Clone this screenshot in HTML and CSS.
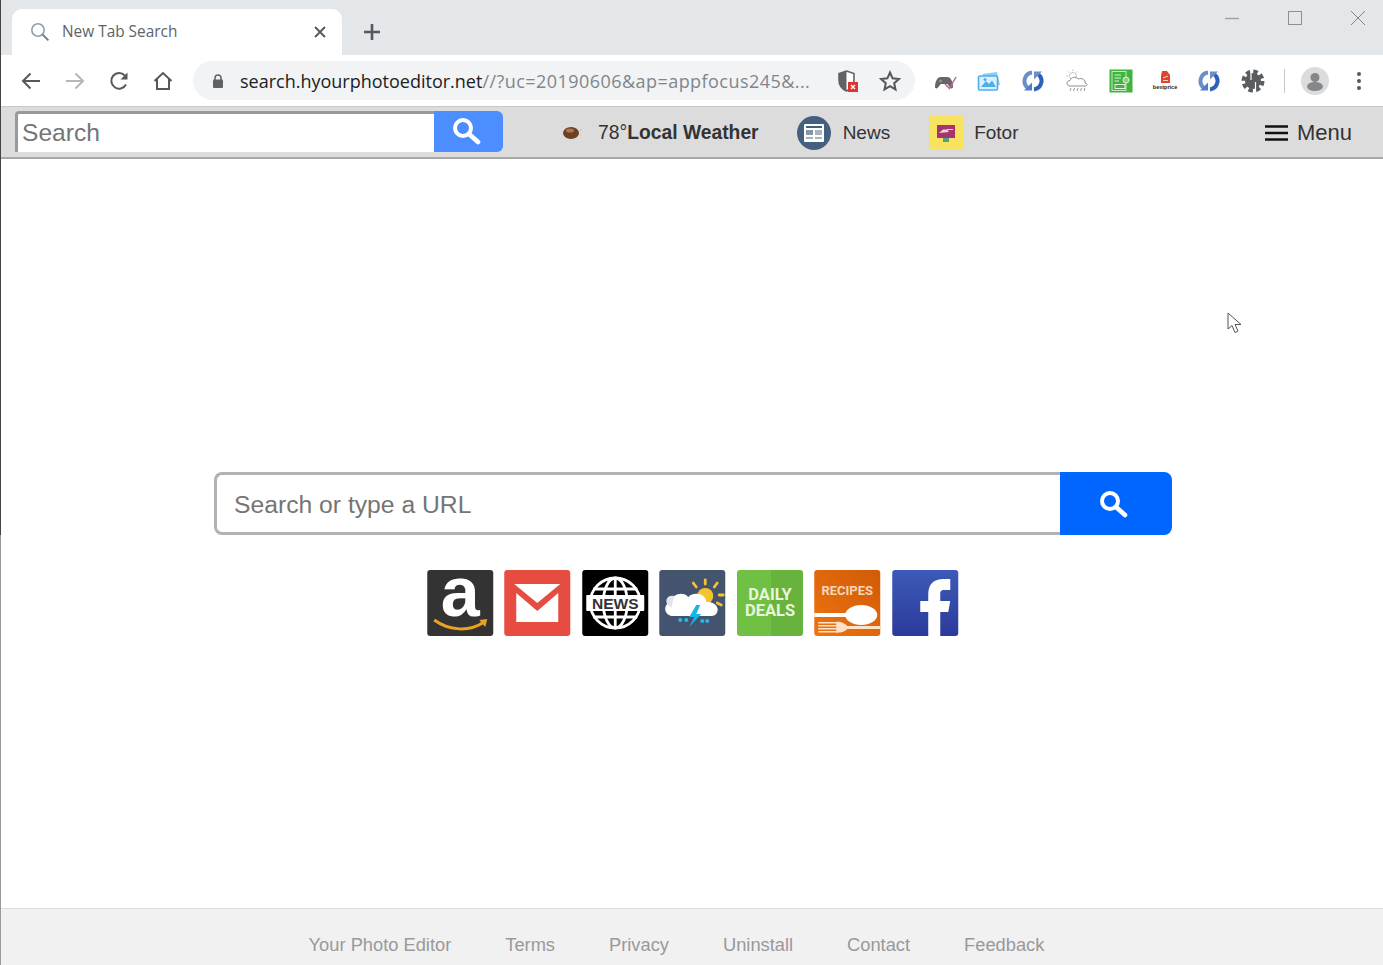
FILE: index.html
```html
<!doctype html>
<html>
  <head>
    <title>New Tab Search</title>
    <link rel="stylesheet" href="styles.css">
  </head>
  <body>
    <div id="window">
      <!-- browser tabs -->
      <div id="tabstrip">
        <div id="tab">
          <svg class="tab_icon" width="20" height="20" viewBox="0 0 20 20"><circle cx="8" cy="8" r="6.2" fill="none" stroke="#8aa0ad" stroke-width="1.6"/><path d="M12.6 12.6L18.4 18.4" stroke="#6f7478" stroke-width="1.8" fill="none"/></svg>
          <span id="tab_title">New Tab Search</span>
          <svg class="tab_close" width="12" height="12" viewBox="0 0 12 12"><path d="M1 1L11 11M11 1L1 11" stroke="#55585c" stroke-width="1.9"/></svg>
        </div>
        <svg id="new_tab" width="18" height="18" viewBox="0 0 18 18"><path d="M9 1V17M1 9H17" stroke="#55585c" stroke-width="2.6"/></svg>
        <div id="window_controls">
          <svg width="14" height="14" viewBox="0 0 14 14"><path d="M0 7.5H14" stroke="#999c9f" stroke-width="1.3"/></svg>
          <svg width="14" height="14" viewBox="0 0 14 14"><rect x=".5" y=".5" width="13" height="13" fill="none" stroke="#8d9093" stroke-width="1"/></svg>
          <svg width="14" height="14" viewBox="0 0 14 14"><path d="M0 0L14 14M14 0L0 14" stroke="#85888b" stroke-width="1"/></svg>
        </div>
      </div>

      <!-- browser toolbar -->
      <div id="toolbar">
        <div id="nav_buttons">
          <svg width="22" height="22" viewBox="0 0 22 22"><path d="M20 11H3M10.500 3.500L3 11L10.500 18.500" fill="none" stroke="#55585c" stroke-width="2"/></svg>
          <svg width="22" height="22" viewBox="0 0 22 22"><path d="M2 11H19M11.500 3.500L19 11L11.500 18.500" fill="none" stroke="#b4b7ba" stroke-width="2"/></svg>
          <svg width="22" height="22" viewBox="0 0 22 22"><path d="M18 14.500A7.800 7.800 0 1 1 16.800 5.500" fill="none" stroke="#55585c" stroke-width="2"/><path d="M19.500 2.500V9.500H12.500Z" fill="#55585c"/></svg>
          <svg width="22" height="22" viewBox="0 0 22 22"><path d="M2.500 11L11 3L19.500 11M5 9V19H17V9" fill="none" stroke="#55585c" stroke-width="2"/></svg>
        </div>
        <div id="address_bar">
          <svg class="lock" width="12" height="14" viewBox="0 0 12 14"><path d="M3 6V4a3 3 0 0 1 6 0V6" fill="none" stroke="#5f6368" stroke-width="1.500"/><rect x="1" y="5.500" width="10" height="8.500" rx="1" fill="#5f6368"/></svg>
          <div id="url"><span class="host">search.hyourphotoeditor.net</span><span class="path">//?uc=20190606&amp;ap=appfocus245&amp;...</span></div>
          <svg class="shield" width="22" height="24" viewBox="0 0 22 24"><path d="M9.500 2L17 4.500V11C17 16 14 20 9.500 22C5 20 2 16 2 11V4.500Z" fill="#fff" stroke="#5f6368" stroke-width="1.600"/><path d="M9.500 2L2 4.500V11C2 16 5 20 9.500 22Z" fill="#5f6368"/><rect x="11" y="13" width="10" height="10" fill="#dd3333"/><path d="M14 16L18 20M18 16L14 20" stroke="#fff" stroke-width="1.400"/></svg>
          <svg class="star" width="22" height="22" viewBox="0 0 22 22"><path d="M11 2.500L13.600 8.300L19.900 9L15.200 13.200L16.500 19.400L11 16.200L5.500 19.400L6.800 13.200L2.100 9L8.400 8.300Z" fill="none" stroke="#55585c" stroke-width="2"/></svg>
        </div>
        <div id="extensions">
          <svg width="24" height="24" viewBox="0 0 24 24"><path d="M2 18C2 13 4 8 8 8H14C18 8 20 13 20 18C20 20 17 20 16 17L14.500 15H8L6 17C5 20 2 20 2 18Z" fill="#66666b"/><circle cx="7.500" cy="12" r="1.300" fill="#999"/><path d="M12 15L16.500 19.500L23 8" fill="none" stroke="#c0639a" stroke-width="1.500"/></svg>
          <svg width="24" height="24" viewBox="0 0 24 24"><path d="M5 5L20 3L23 16L19 17Z" fill="#8fcdf5"/><rect x="1.500" y="7" width="19" height="14" rx="1.500" fill="#d9f0fd" stroke="#4eaeea" stroke-width="1.600"/><path d="M4 18L9 12L12 15L15 11.500L19 18Z" fill="#4eaeea"/><circle cx="8" cy="10.500" r="1.500" fill="#4eaeea"/></svg>
          <svg width="24" height="24" viewBox="0 0 24 24"><use href="#sync_arrows"/></svg>
          <svg class="cloud" width="26" height="26" viewBox="0 0 26 26"><circle cx="9" cy="8" r="3.500" fill="none" stroke="#c4c4c4" stroke-width="1"/><path d="M9 1.500V3M2.500 8H4M4.500 3.500L5.500 4.500M13.500 3.500L12.500 4.500" stroke="#bdbdbd" stroke-width="1"/><path d="M6 18C2 18 2 12.500 6 12.500C7 9 12 8 14 11C18 9.500 22 12 21 15C24 15.500 23.500 18 21 18Z" fill="#fff" stroke="#8e8e8e" stroke-width="1"/><path d="M7 20L6 23M10.500 20L9.500 23M14 20L13 23M17.500 20L16.500 23M21 20L20 23" stroke="#999" stroke-width="1"/></svg>
          <svg width="24" height="24" viewBox="0 0 24 24"><rect x=".5" y=".5" width="23" height="23" fill="#41b33f"/><rect x="3" y="2.500" width="14" height="19" fill="none" stroke="#c8e8c4" stroke-width="1"/><path d="M5.500 6H12M5.500 9H12M5.500 12H10" stroke="#d8f0d4" stroke-width="1"/><circle cx="17" cy="11" r="3" fill="#8fcf88" stroke="#d8f0d4" stroke-width="1"/><rect x="6" y="15.500" width="10" height="4" fill="none" stroke="#e8f7e4" stroke-width="1"/></svg>
          <div class="bestprice">
            <svg width="11" height="13" viewBox="0 0 11 13"><path d="M2 0H7L10 4V12H1V5Z" fill="#e0452c"/><path d="M3 7L8 5M3 9.500H8" stroke="#fbd9c0" stroke-width="1"/></svg>
            <span>bestprice</span>
          </div>
          <svg width="24" height="24" viewBox="0 0 24 24"><use href="#sync_arrows"/></svg>
          <svg width="24" height="24" viewBox="0 0 24 24"><circle cx="12" cy="12" r="9.500" fill="none" stroke="#5a5d60" stroke-width="4" stroke-dasharray="4.500 2.960"/><circle cx="12" cy="12" r="8" fill="#5a5d60"/><path d="M10 2V11M14.500 13V22" stroke="#fff" stroke-width="1.200"/></svg>
        </div>
        <div id="toolbar_sep"></div>
        <svg id="avatar" width="28" height="28" viewBox="0 0 28 28"><circle cx="14" cy="14" r="14" fill="#dcdcdc"/><circle cx="14" cy="10.500" r="4.500" fill="#85888b"/><ellipse cx="14" cy="19.500" rx="8" ry="4.500" fill="#85888b"/></svg>
        <svg id="more" width="6" height="20" viewBox="0 0 6 20"><circle cx="3" cy="3" r="2" fill="#55585c"/><circle cx="3" cy="10" r="2" fill="#55585c"/><circle cx="3" cy="17" r="2" fill="#55585c"/></svg>
      </div>

      <!-- site search bar -->
      <div id="site_bar">
        <div id="site_search">
          <div id="site_input">Search</div>
          <button id="site_button">
            <svg width="30" height="30" viewBox="0 0 30 30"><circle cx="12" cy="12" r="8" fill="none" stroke="#fff" stroke-width="4"/><path d="M18 18L27 26" stroke="#fff" stroke-width="4.600" stroke-linecap="round"/></svg>
          </button>
        </div>
        <div class="bar_link weather">
          <svg width="22" height="16" viewBox="0 0 22 16"><ellipse cx="9" cy="8" rx="8" ry="6" fill="#6e3f22"/><ellipse cx="8" cy="5.500" rx="4" ry="2" fill="#a97a55"/><path d="M18 5H20M18 10H19" stroke="#bbb" stroke-width="1"/></svg>
          <span class="temp">78°<b>Local Weather</b></span>
        </div>
        <div class="bar_link news">
          <svg width="34" height="34" viewBox="0 0 34 34"><circle cx="17" cy="17" r="17" fill="#45607f"/><rect x="7" y="8" width="20" height="18" rx="1" fill="#fff"/><rect x="9" y="10" width="16" height="2" fill="#45607f"/><rect x="9" y="14" width="7" height="5" fill="#8796a8"/><rect x="18" y="14" width="7" height="5" fill="#a9b4c2"/><rect x="9" y="21" width="7" height="2" fill="#a9b4c2"/><rect x="18" y="21" width="7" height="2" fill="#a9b4c2"/></svg>
          <span>News</span>
        </div>
        <div class="bar_link fotor">
          <svg width="34" height="34" viewBox="0 0 34 34"><rect width="34" height="34" fill="#f7e35f"/><rect x="8" y="9" width="18" height="13" fill="#a8336e"/><path d="M10 17L14 13.500H18L20 16Z" fill="#e9d7e2"/><rect x="18" y="13" width="6" height="1" fill="#e9d7e2"/><rect x="14" y="22" width="6" height="4" fill="#4aa38a"/></svg>
          <span>Fotor</span>
        </div>
        <div id="menu_link">
          <svg width="23" height="18" viewBox="0 0 23 18"><path d="M0 2.500H23M0 9H23M0 15.500H23" stroke="#111" stroke-width="2.600"/></svg>
          <span>Menu</span>
        </div>
      </div>

      <!-- page -->
      <div id="main">
        <div id="big_search">
          <div id="big_input">Search or type a URL</div>
          <button id="big_button">
            <svg width="30" height="30" viewBox="0 0 30 30"><circle cx="12" cy="12" r="8" fill="none" stroke="#fff" stroke-width="4"/><path d="M18 18L27 26" stroke="#fff" stroke-width="4.600" stroke-linecap="round"/></svg>
          </button>
        </div>
        <div id="tiles">
          <svg class="tile" viewBox="0 0 66 66"><rect width="66" height="66" rx="3" fill="#333"/><text x="33" y="46" text-anchor="middle" class="tile_amazon">a</text><path d="M7 50C22 61 42 62 57 52" fill="none" stroke="#eba31f" stroke-width="3"/><path d="M52 50L60 49L58 57Z" fill="#eba31f"/></svg>
          <svg class="tile" viewBox="0 0 66 66"><rect width="66" height="66" rx="3" fill="#e64c40"/><path d="M10 14H56L33 33Z" fill="#fff"/><path d="M12 23L33 41L54 23V52H12Z" fill="#fff"/></svg>
          <svg class="tile" viewBox="0 0 66 66"><rect width="66" height="66" rx="3" fill="#000"/><circle cx="33" cy="33" r="25" fill="none" stroke="#fff" stroke-width="2.800"/><ellipse cx="33" cy="33" rx="12" ry="25" fill="none" stroke="#fff" stroke-width="2.800"/><path d="M33 8V58M11 19H55M11 47H55" stroke="#fff" stroke-width="2.800"/><rect x="4" y="25" width="58" height="16" rx="1" fill="#fff"/><text x="33" y="38.500" text-anchor="middle" class="tile_news">NEWS</text></svg>
          <svg class="tile" viewBox="0 0 66 66"><rect width="66" height="66" rx="3" fill="#44546f"/><circle cx="46" cy="26" r="8" fill="#f4c430"/><path d="M46 10V14M34 13L37 17M58 13L55 17M60 25H64M58 33L62 35" stroke="#f4c430" stroke-width="2.800" stroke-linecap="round"/><path d="M14 46C5 46 3 35 11 32C13 24 24 21 29 27C35 21 47 24 47 32C55 31 60 37 58 42C57 45 54 46 52 46Z" fill="#fff"/><path d="M10 36C4 32 8 24 15 26L12 38Z" fill="#dfe6ee"/><path d="M37 35L30 47H35L30 57L42 44H37L41 35Z" fill="#19b5e8"/><circle cx="21" cy="50" r="2" fill="#2ab8e8"/><circle cx="27" cy="50" r="2" fill="#2ab8e8"/><circle cx="43" cy="51" r="2" fill="#2ab8e8"/><circle cx="48" cy="51" r="2" fill="#2ab8e8"/></svg>
          <div class="tile tile_deals">
            <div>DAILY</div>
            <div>DEALS</div>
          </div>
          <svg class="tile" viewBox="0 0 66 66"><defs><linearGradient id="recipes_bg" x1="0" y1="1" x2="1" y2="0"><stop offset="0" stop-color="#ee7410"/><stop offset="1" stop-color="#d05a08"/></linearGradient></defs><rect width="66" height="66" rx="3" fill="url(#recipes_bg)"/><text x="33" y="25" text-anchor="middle" class="tile_recipes">RECIPES</text><path d="M0 43H32V47H0Z" fill="#fff"/><ellipse cx="47" cy="45" rx="16" ry="10" fill="#fff"/><path d="M4 52H24V53.500H4ZM4 55H24V56.500H4ZM4 58H24V59.500H4ZM4 61H24V62.500H4Z" fill="#fce2c8"/><path d="M22 52C26 51 30 53 33 56H66V59H33C30 62 26 63 22 62.500Z" fill="#fce2c8"/></svg>
          <svg class="tile" viewBox="0 0 66 66"><defs><linearGradient id="fb_bg" x1="0" y1="0" x2="0" y2="1"><stop offset="0" stop-color="#3d5ab8"/><stop offset="1" stop-color="#2b3a9a"/></linearGradient></defs><rect width="66" height="66" rx="3" fill="url(#fb_bg)"/><path d="M36 66V42H28V31H36V24C36 14 42 9 51 9H58V20H52C49 20 48 21 48 24V31H58L56 42H48V66Z" fill="#fff"/></svg>
        </div>
        <svg id="mouse_cursor" width="16" height="24" viewBox="0 0 16 24"><path d="M1 1V17L5 13.500L8 20.500L11 19L8 12.500L14 12.500Z" fill="#fff" stroke="#555" stroke-width="1"/></svg>
      </div>

      <div id="footer">
        <a href="#">Your Photo Editor</a>
        <a href="#">Terms</a>
        <a href="#">Privacy</a>
        <a href="#">Uninstall</a>
        <a href="#">Contact</a>
        <a href="#">Feedback</a>
      </div>
    </div>

    <svg width="0" height="0" class="hidden">
      <symbol id="sync_arrows" viewBox="0 0 24 24">
        <path d="M11 3.600A8.500 8.500 0 0 0 6.500 18.500" fill="none" stroke="#6b8fc9" stroke-width="4"/>
        <path d="M3 21.500H11V13.500Z" fill="#4d7fc8"/>
        <path d="M13 20.400A8.500 8.500 0 0 0 17.500 5.500" fill="none" stroke="#2c62b8" stroke-width="4"/>
        <path d="M21 2.500H13V10.500Z" fill="#6b8fc9"/>
      </symbol>
    </svg>
  </body>
</html>
```

FILE: styles.css
```css
html, body {
  margin: 0;
  padding: 0;
}

body {
  font-family: "Liberation Sans", Arial, sans-serif;
  background-color: #fff;
  overflow: hidden;
}

.hidden {
  position: absolute;
}

#window {
  height: 965px;
  display: flex;
  flex-direction: column;
  border-left: 1px solid #777;
  border-image: linear-gradient(#444 535px, #999 535px) 1;
  box-sizing: border-box;
  overflow: hidden;
}

/* browser tabs */
#tabstrip {
  height: 55px;
  flex: none;
  display: flex;
  align-items: flex-end;
  background-color: #e4e7ea;
  padding-left: 11px;
}

#tab {
  width: 330px;
  height: 46px;
  box-sizing: border-box;
  padding: 0 16px 1px 18px;
  display: flex;
  align-items: center;
  background-color: #fff;
  border-radius: 10px 10px 0 0;
}

.tab_icon {
  flex: none;
}

#tab_title {
  margin-left: 12px;
  flex: 1;
  font-family: "Open Sans", sans-serif;
  font-size: 15.400px;
  color: #5f6368;
}

#new_tab {
  margin: 0 0 14px 21px;
}

#window_controls {
  margin-left: auto;
  align-self: flex-start;
  display: flex;
  gap: 49px;
  padding: 11px 18px 0 0;
}

/* browser toolbar */
#toolbar {
  height: 51px;
  flex: none;
  display: flex;
  align-items: center;
  background-color: #fff;
  box-sizing: border-box;
  padding-left: 19px;
}

#nav_buttons {
  display: flex;
  gap: 22px;
}

#address_bar {
  width: 722px;
  height: 39px;
  flex: none;
  margin-left: 19px;
  box-sizing: border-box;
  padding: 0 14px 0 19px;
  display: flex;
  align-items: center;
  background-color: #f1f3f4;
  border-radius: 20px;
}

#url {
  flex: 1;
  margin-left: 16px;
  font-family: "Open Sans", sans-serif;
  font-size: 18px;
  white-space: nowrap;
  color: #80868b;
}

.host {
  color: #202124;
}

.path {
  letter-spacing: 0.450px;
}

.shield {
  margin-right: 20px;
}

#extensions {
  display: flex;
  align-items: center;
  margin-left: 18px;
  gap: 20px;
}

.cloud {
  margin: 0 -1px;
}

.bestprice {
  width: 24px;
  display: flex;
  flex-direction: column;
  align-items: center;
  font-size: 5.500px;
  font-weight: bold;
  line-height: 7px;
  color: #222;
}

#toolbar_sep {
  width: 1px;
  height: 24px;
  margin-left: 19px;
  background-color: #c8c8c8;
}

#avatar {
  margin-left: 16px;
}

#more {
  margin-left: 27px;
}

/* site search bar */
#site_bar {
  height: 53px;
  flex: none;
  box-sizing: border-box;
  display: flex;
  align-items: center;
  padding: 0 31px 0 14px;
  background-color: #dcdcdc;
  border-top: 1px solid #c8c8c8;
  border-bottom: 2px solid #a8a8a8;
  color: #333;
  font-size: 19px;
}

#site_search {
  display: flex;
  width: 488px;
  height: 41px;
  margin: 0 59px 2px 0;
}

#site_input {
  flex: 1;
  box-sizing: border-box;
  padding-left: 4px;
  background-color: #fff;
  border: solid #999;
  border-width: 3px 0 0 3px;
  border-radius: 4px 0 0 0;
  font-size: 24.600px;
  line-height: 38px;
  color: #757575;
}

#site_button {
  width: 69px;
  border: 0;
  padding: 0 6px 0 0;
  display: flex;
  align-items: center;
  justify-content: center;
  background-color: #4c8dff;
  border-radius: 0 6px 6px 0;
}

.bar_link {
  display: flex;
  align-items: center;
  margin-top: 2px;
}

.weather {
  gap: 14px;
  font-size: 19.300px;
  margin-right: 38px;
}

.weather b {
  color: #333;
}

.news {
  gap: 12px;
  margin-right: 39px;
}

.fotor {
  gap: 11px;
}

#menu_link {
  margin: 2px 0 0 auto;
  display: flex;
  align-items: center;
  gap: 9px;
  font-size: 22px;
}

/* page */
#main {
  flex: 1;
  position: relative;
  display: flex;
  flex-direction: column;
  align-items: center;
  padding-top: 313px;
  box-sizing: border-box;
}

#big_search {
  width: 958px;
  height: 63px;
  margin-left: 2px;
  display: flex;
}

#big_input {
  flex: 1;
  box-sizing: border-box;
  padding-left: 17px;
  border: 3px solid #b2b2b2;
  border-right: 0;
  border-radius: 8px 0 0 8px;
  font-size: 24.700px;
  line-height: 59px;
  color: #757575;
}

#big_button {
  width: 112px;
  border: 0;
  padding: 0 6px 0 0;
  display: flex;
  align-items: center;
  justify-content: center;
  background-color: #0066ff;
  border-radius: 0 8px 8px 0;
}

#tiles {
  display: flex;
  gap: 11px;
  margin: 35px 0 0 1px;
}

.tile {
  width: 66.500px;
  height: 66px;
  overflow: visible;
}

.tile text {
  font-family: "Liberation Sans", sans-serif;
  font-weight: bold;
}

.tile .tile_amazon {
  font-size: 70px;
  fill: #fff;
}

.tile .tile_news {
  font-size: 15.500px;
  fill: #333;
}

.tile_deals {
  display: flex;
  flex-direction: column;
  align-items: center;
  justify-content: center;
  background: linear-gradient(to right, #70c043 51%, #68b33d 51%);
  border-radius: 3px;
  font-family: Roboto, sans-serif;
  font-weight: bold;
  font-size: 16.500px;
  line-height: 16px;
  color: #e8f5dc;
}

.tile .tile_recipes {
  font-family: Roboto, sans-serif;
  font-size: 13px;
  fill: #f8d6b4;
}

#mouse_cursor {
  position: absolute;
  left: 1226px;
  top: 153px;
}

#footer {
  height: 57px;
  flex: none;
  box-sizing: border-box;
  display: flex;
  justify-content: center;
  gap: 54px;
  padding: 25px 31px 0 0;
  background-color: #f1f1f1;
  border-top: 1px solid #dcdcdc;
  font-size: 18.300px;
}

#footer a {
  color: #999;
  text-decoration: none;
}
```
